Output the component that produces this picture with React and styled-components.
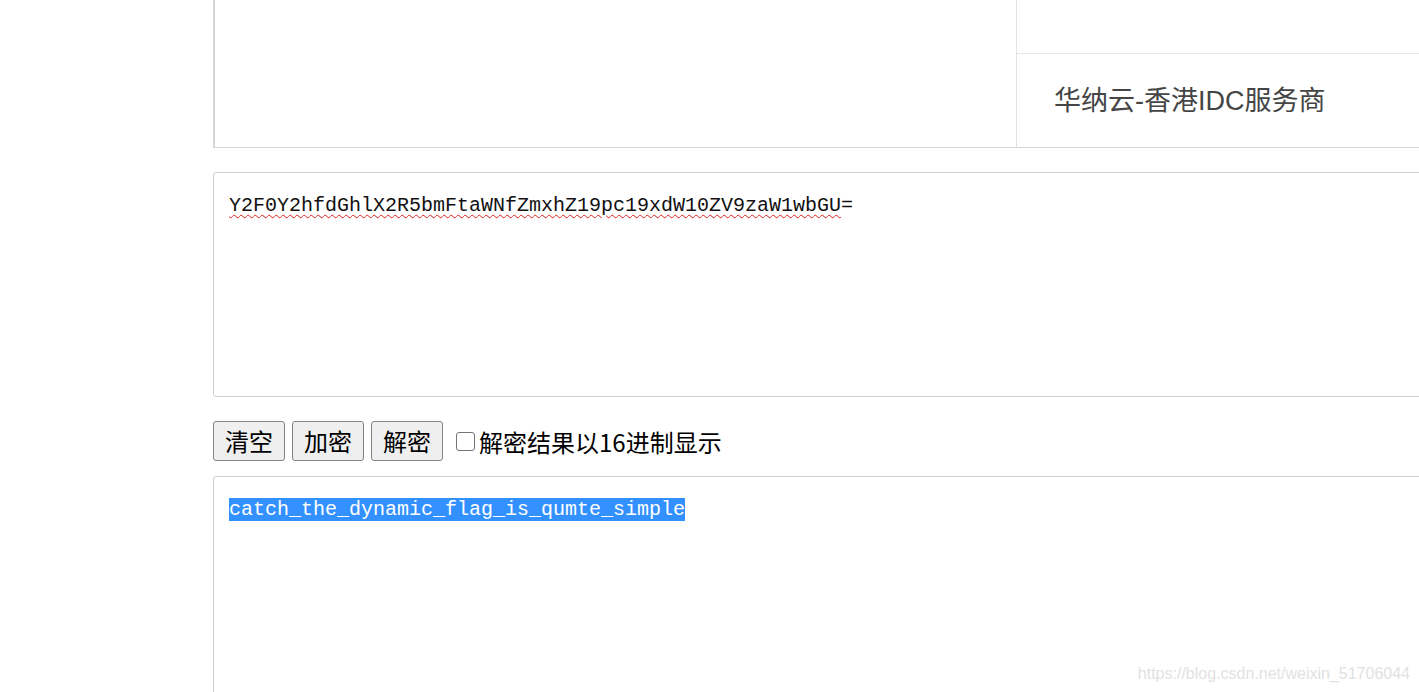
import React from 'react'
import styled, { createGlobalStyle } from 'styled-components'

const Global = createGlobalStyle`
  html, body {
    margin: 0;
    padding: 0;
    background: #fff;
    overflow: hidden;
  }
  body {
    font-family: "Liberation Sans", "Noto Sans CJK SC", sans-serif;
  }
`

const Page = styled.div`
  position: relative;
  width: 1419px;
  height: 692px;
  overflow: hidden;
  padding-left: 213px;
  box-sizing: border-box;
`

const AdPanel = styled.div`
  display: flex;
  width: 1300px;
  height: 148px;
  border-left: 2px solid #d6d6d6;
  border-bottom: 1px solid #d6d6d6;
  box-sizing: border-box;
`

const AdBlank = styled.div`
  width: 801px;
  flex: none;
`

const AdSide = styled.div`
  flex: 1;
  display: flex;
  flex-direction: column;
  border-left: 1px solid #e3e3e3;
`

const AdTop = styled.div`
  height: 53px;
  border-bottom: 1px solid #e6e6e6;
`

const AdTitle = styled.div`
  flex: 1;
  display: flex;
  align-items: center;
  padding-left: 37px;
  padding-bottom: 4px;
  font-family: "Liberation Sans", "Noto Sans CJK SC", sans-serif;
  font-size: 27px;
  color: #454545;
`

const TextBox = styled.div`
  margin-top: ${p => p.$top}px;
  width: 1300px;
  height: ${p => p.$height}px;
  border: 1px solid #cfcfcf;
  border-radius: 3px;
  box-sizing: border-box;
  padding: 21px 15px 20px;
  font-family: "Liberation Mono", "DejaVu Sans Mono", monospace;
  font-size: 20px;
  line-height: 23px;
  color: #111;
`

const Squiggle = styled.span`
  text-decoration: underline wavy #e02020;
  text-decoration-thickness: 1px;
  text-underline-offset: 3px;
`

const Selected = styled.span`
  background: #3390ff;
  color: #fff;
`

const Toolbar = styled.div`
  display: flex;
  align-items: center;
  gap: 7px;
  margin-top: 24px;
  height: 40px;
`

const Button = styled.button`
  width: 72px;
  height: 40px;
  padding: 0;
  border: 1px solid #858585;
  border-radius: 3px;
  background: #efefef;
  font-family: "Noto Sans CJK SC", sans-serif;
  font-size: 24px;
  line-height: 1;
  color: #000;
`

const CheckLabel = styled.label`
  display: flex;
  align-items: center;
  margin-left: 6px;
  font-family: "Noto Sans CJK SC", sans-serif;
  font-size: 24px;
  color: #000;
`

const Box = styled.span`
  width: 17px;
  height: 17px;
  border: 1px solid #767676;
  border-radius: 3px;
  background: #fff;
  margin-right: 4px;
  margin-top: 1px;
`

const Watermark = styled.div`
  position: absolute;
  right: 9px;
  bottom: 9px;
  font-family: "Liberation Sans", sans-serif;
  font-size: 16px;
  color: #e2e2e2;
`

export default function App() {
  return (
    <>
      <Global />
      <Page>
        <AdPanel>
          <AdBlank />
          <AdSide>
            <AdTop />
            <AdTitle>华纳云-香港IDC服务商</AdTitle>
          </AdSide>
        </AdPanel>

        <TextBox $top={24} $height={225}>
          <Squiggle>Y2F0Y2hfdGhlX2R5bmFtaWNfZmxhZ19pc19xdW10ZV9zaW1wbGU</Squiggle>=
        </TextBox>

        <Toolbar>
          <Button>清空</Button>
          <Button>加密</Button>
          <Button>解密</Button>
          <CheckLabel>
            <Box />
            解密结果以16进制显示
          </CheckLabel>
        </Toolbar>

        <TextBox $top={15} $height={260}>
          <Selected>catch_the_dynamic_flag_is_qumte_simple</Selected>
        </TextBox>

        <Watermark>https://blog.csdn.net/weixin_51706044</Watermark>
      </Page>
    </>
  )
}
